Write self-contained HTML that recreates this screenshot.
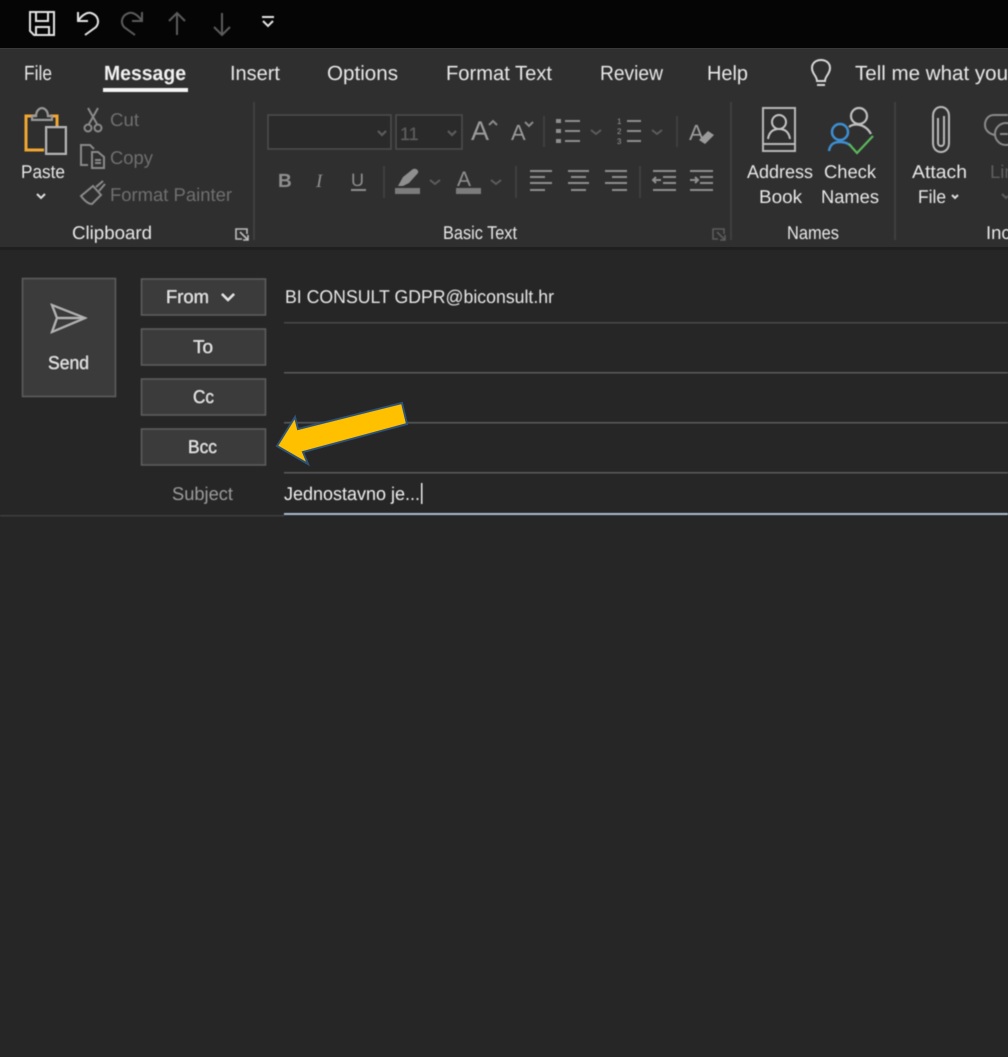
<!DOCTYPE html>
<html><head><meta charset="utf-8"><title>Outlook</title>
<style>
html,body{margin:0;padding:0;background:#262626;width:1008px;height:1057px;overflow:hidden}
svg{display:block}
text{font-family:"Liberation Sans",sans-serif;fill:#e8e8e8;font-size:20.5px}
.d{fill:#6f6f6f}
.s{font-size:18.5px}
.ic{fill:none;stroke:#d8d8d8;stroke-width:2}
.g{fill:none;stroke:#8a8a8a;stroke-width:2}
.m{fill:none;stroke:#5c5c5c;stroke-width:2}
</style></head><body>
<svg width="1008" height="1057" viewBox="0 0 1008 1057" xmlns="http://www.w3.org/2000/svg" text-rendering="geometricPrecision">
<filter id="b" x="-5%" y="-5%" width="110%" height="110%"><feGaussianBlur stdDeviation="0.45"/></filter>
<rect width="1008" height="1057" fill="#262626"/>
<rect width="1008" height="48" fill="#050505"/>
<rect y="48" width="1008" height="199" fill="#2f2f2f"/>
<rect y="48" width="1008" height="1" fill="#3a3a3a"/>
<rect y="247" width="1008" height="3" fill="#1f1f1f"/>
<g filter="url(#b)">
<!-- QAT -->
<path class="ic" d="M30 12H54V35H34L30 31Z M36 12V21H48V12 M36 35V27H49V35" style="stroke:#e4e4e4"/>
<path class="ic" d="M78 12V21H88 M78 21C82 15 87 12 91 13C98 15 100 22 96 27L85 35" style="stroke:#e4e4e4"/>
<path class="m" d="M142 12V21H132 M142 21C138 15 133 12 129 13C122 15 120 22 124 27L135 35"/>
<path class="m" d="M177 35V13M169 21L177 13L185 21"/>
<path class="m" d="M222 13V35M214 27L222 35L230 27"/>
<path fill="none" stroke="#e4e4e4" stroke-width="2" d="M262 17H274M263 21L268 26L273 21"/>
<!-- Tabs -->
<text x="24" y="80" textLength="28" lengthAdjust="spacingAndGlyphs">File</text>
<text x="104" y="80" textLength="82" lengthAdjust="spacingAndGlyphs" font-weight="bold" style="fill:#f2f2f2">Message</text>
<rect x="103" y="88" width="85" height="4" fill="#f5f5f5"/>
<text x="230" y="80" textLength="50" lengthAdjust="spacingAndGlyphs">Insert</text>
<text x="327" y="80" textLength="71" lengthAdjust="spacingAndGlyphs">Options</text>
<text x="446" y="80" textLength="106" lengthAdjust="spacingAndGlyphs">Format Text</text>
<text x="600" y="80" textLength="63" lengthAdjust="spacingAndGlyphs">Review</text>
<text x="707" y="80" textLength="41" lengthAdjust="spacingAndGlyphs">Help</text>
<path class="ic" d="M817 81C817 76 812 74 812 68C812 63 816 60 821 60C826 60 830 63 830 68C830 74 825 76 825 81Z M817 85H825"/>
<text x="855" y="80" textLength="153" lengthAdjust="spacingAndGlyphs">Tell me what you</text>
<!-- separators -->
<path stroke="#454545" stroke-width="1.5" d="M254 102V240M544 116V147M384 166V198M516 166V198M640 166V198M677 116V147M731 102V240M895 102V240" fill="none"/>
<!-- Paste -->
<path fill="none" stroke="#f0a732" stroke-width="3" d="M45 116H26V150H44"/>
<path fill="none" stroke="#f0a732" stroke-width="3" d="M50 116H57V126"/>
<path fill="#2f2f2f" stroke="#9a9a9a" stroke-width="2" d="M32 120V116H36C36 110 40 108 42 108C44 108 48 110 48 116H52V120Z"/>
<rect x="46" y="127" width="20" height="27" fill="#2f2f2f" stroke="#b5b5b5" stroke-width="2"/>
<text x="21" y="178" textLength="44" lengthAdjust="spacingAndGlyphs" class="s">Paste</text>
<path fill="none" stroke="#e0e0e0" stroke-width="2" d="M37 194L41 198L45 194"/>
<!-- Cut/Copy/Painter -->
<path class="g" d="M88 108L97 124M98 108L89 124"/><circle class="g" cx="88" cy="128" r="3.5"/><circle class="g" cx="98" cy="128" r="3.5"/>
<path class="g" d="M88 165H81V145H90L94 149 M92 152H98L104 157V168H92Z M95 160H101M95 163H101"/>
<path class="g" d="M81 196L93 186L101 195L92 204C88 204 84 200 81 196Z"/>
<path class="g" d="M96 187L103 181 M99 191L105 184"/>
<text class="d s" x="110" y="126" textLength="29" lengthAdjust="spacingAndGlyphs">Cut</text>
<text class="d s" x="110" y="164" textLength="43" lengthAdjust="spacingAndGlyphs">Copy</text>
<text class="d s" x="110" y="201" textLength="122" lengthAdjust="spacingAndGlyphs">Format Painter</text>
<text class="s" x="72" y="239" textLength="80" lengthAdjust="spacingAndGlyphs">Clipboard</text>
<path fill="none" stroke="#bdbdbd" stroke-width="1.6" d="M242 239H236V229H247V234M240 232L248 240M248 235V240H243"/>
<!-- Font boxes -->
<rect x="268" y="115" width="123" height="34" fill="#2a2a2a" stroke="#4d4d4d" stroke-width="1.5"/>
<rect x="396" y="115" width="66" height="34" fill="#2a2a2a" stroke="#4d4d4d" stroke-width="1.5"/>
<path class="m" d="M378 131L382 135L386 131M448 131L452 135L456 131"/>
<text class="d" x="400" y="140" style="font-size:18px;fill:#5e5e5e">11</text>
<text x="471" y="140" style="font-size:27px;fill:#9b9b9b">A</text>
<path class="g" d="M489 125L493 121L497 125"/>
<text x="511" y="140" style="font-size:22px;fill:#9b9b9b">A</text>
<path class="g" d="M525 122L529 126L533 122"/>
<!-- list icons -->
<path stroke="#8f8f8f" stroke-width="2" fill="none" d="M565 121H580M565 131H580M565 141H580M627 121H641M627 131H641M627 141H641"/>
<rect x="556" y="119" width="5" height="4" fill="#8f8f8f"/><rect x="556" y="129" width="5" height="4" fill="#8f8f8f"/><rect x="556" y="139" width="5" height="4" fill="#8f8f8f"/>
<path class="m" d="M591 130L596 134L601 130M652 130L657 134L662 130"/>
<text x="617" y="124" style="font-size:8px;fill:#9b9b9b">1</text><text x="617" y="134" style="font-size:8px;fill:#9b9b9b">2</text><text x="617" y="144" style="font-size:8px;fill:#9b9b9b">3</text>
<!-- Clear -->
<text x="689" y="140" style="font-size:22px;fill:#9b9b9b">A</text>
<path fill="#9b9b9b" d="M699 140L708 131L714 135L705 144Z"/>
<!-- Row 2 -->
<text x="278" y="187" font-weight="bold" style="font-size:19px;fill:#8f8f8f">B</text>
<text x="316" y="187" font-style="italic" style="font-size:19px;fill:#8f8f8f;font-family:'Liberation Serif',serif">I</text>
<text x="351" y="186" style="font-size:18px;fill:#8f8f8f">U</text>
<rect x="351" y="189" width="15" height="2" fill="#8f8f8f"/>
<path fill="#8f8f8f" d="M398 186L403 177L413 169C416 168 419 170 418 173L409 183L403 186Z"/>
<rect x="395" y="188" width="25" height="6" fill="#7c7c7c"/>
<path class="m" d="M430 180L435 184L440 180M491 180L496 184L501 180"/>
<text x="457" y="186" style="font-size:21px;fill:#8f8f8f">A</text>
<rect x="456" y="188" width="25" height="6" fill="#7c7c7c"/>
<path stroke="#8f8f8f" stroke-width="2" fill="none" d="M530 171H552M530 177H545M530 183H552M530 190H545 M568 171H589M571 177H586M568 183H589M571 190H586 M605 171H627M612 177H627M605 183H627M612 190H627 M653 171H676M663 177H676M663 183H676M653 190H676 M690 171H713M690 190H713M700 177H713M700 183H713"/>
<path stroke="#8f8f8f" stroke-width="2" fill="none" d="M661 180H653M656 177L653 180L656 183 M690 180H698M695 177L698 180L695 183"/>
<text class="s" x="443" y="239" textLength="74" lengthAdjust="spacingAndGlyphs">Basic Text</text>
<path fill="none" stroke="#5c5c5c" stroke-width="1.6" d="M718 239H713V229H724V234M717 232L725 240M725 235V240H720"/>
<!-- Names -->
<path class="ic" style="stroke:#b9b9b9" d="M763 108H795V151H763Z M763 144H795"/>
<circle class="ic" style="stroke:#c5c5c5" cx="779" cy="122" r="7"/>
<path class="ic" style="stroke:#c5c5c5" d="M768 139C769 132 773 129 779 129C785 129 789 132 790 139"/>
<circle class="ic" style="stroke:#c0c0c0;stroke-width:2.2" cx="859" cy="116" r="8"/>
<path class="ic" style="stroke:#c0c0c0;stroke-width:2.2" d="M849 127C853 123 865 123 871 134"/>
<circle fill="none" stroke="#3d8fd1" stroke-width="2.5" cx="840" cy="132" r="8"/>
<path fill="none" stroke="#3d8fd1" stroke-width="2.5" d="M829 151C830 144 834 142 840 142C845 142 848 143 851 146"/>
<path fill="none" stroke="#5cb85c" stroke-width="2.2" d="M849 144L857 153L873 136"/>
<text x="747" y="178" textLength="66" lengthAdjust="spacingAndGlyphs" class="s">Address</text>
<text x="759" y="203" textLength="43" lengthAdjust="spacingAndGlyphs" class="s">Book</text>
<text x="824" y="178" textLength="52" lengthAdjust="spacingAndGlyphs" class="s">Check</text>
<text x="821" y="203" textLength="58" lengthAdjust="spacingAndGlyphs" class="s">Names</text>
<text class="s" x="787" y="239" textLength="52" lengthAdjust="spacingAndGlyphs">Names</text>
<!-- Attach -->
<path fill="none" stroke="#b9b9b9" stroke-width="2" d="M938 118V143C938 147 944 147 944 143V116 M933 116V143C933 149 937 152 941 152C945 152 949 149 949 143V116C949 110 945 107 941 107C937 107 933 110 933 116"/>
<text x="912" y="178" textLength="55" lengthAdjust="spacingAndGlyphs" class="s">Attach</text>
<text x="918" y="203" textLength="28" lengthAdjust="spacingAndGlyphs" class="s">File</text>
<path fill="none" stroke="#e0e0e0" stroke-width="2" d="M952 195L955 198L958 195"/>
<path class="g" d="M1008 115H994C988 115 985 120 985 125C985 130 989 134 995 135"/>
<circle class="g" cx="1006" cy="134" r="11"/><path class="g" d="M1000 134H1008"/>
<text class="d" x="990" y="178" style="font-size:18.5px;fill:#5e5e5e">Lin</text>
<path class="m" d="M1002 194L1006 198L1008 196"/>
<text class="s" x="986" y="239">Inc</text>
<!-- Send -->
<rect x="22.5" y="278.5" width="93" height="118" fill="#3a3a3a" stroke="#5f5f5f" stroke-width="1.5"/>
<path fill="none" stroke="#b5b5b5" stroke-width="2" d="M52 305L85 318L52 332L57 318Z M57 318H85"/>
<text x="48" y="369" textLength="41" lengthAdjust="spacingAndGlyphs" class="s">Send</text>
<!-- Buttons -->
<rect x="141.500" y="279" width="124" height="36" fill="#3a3a3a" stroke="#5f5f5f" stroke-width="1.5"/>
<rect x="141.500" y="329" width="124" height="36" fill="#3a3a3a" stroke="#5f5f5f" stroke-width="1.5"/>
<rect x="141.500" y="379" width="124" height="36" fill="#3a3a3a" stroke="#5f5f5f" stroke-width="1.5"/>
<rect x="141.500" y="429" width="124" height="36" fill="#3a3a3a" stroke="#5f5f5f" stroke-width="1.5"/>
<text x="166" y="303" textLength="43" lengthAdjust="spacingAndGlyphs" class="s">From</text>
<path fill="none" stroke="#e8e8e8" stroke-width="2.2" d="M222 294L228 300L234 294"/>
<text x="193" y="353" textLength="20" lengthAdjust="spacingAndGlyphs" class="s">To</text>
<text x="193" y="403" textLength="21" lengthAdjust="spacingAndGlyphs" class="s">Cc</text>
<text x="188" y="453" textLength="29" lengthAdjust="spacingAndGlyphs" class="s">Bcc</text>
<text x="172" y="500" textLength="61" lengthAdjust="spacingAndGlyphs" class="s" style="fill:#9b9b9b">Subject</text>
<!-- Fields -->
<text x="285" y="303" textLength="269" lengthAdjust="spacingAndGlyphs" class="s">BI CONSULT GDPR@biconsult.hr</text>
<rect x="284" y="322" width="724" height="1.500" fill="#4a4a4a"/>
<rect x="284" y="372" width="724" height="1.500" fill="#5c5c5c"/>
<rect x="284" y="422" width="724" height="1.500" fill="#5c5c5c"/>
<rect x="284" y="472" width="724" height="1.500" fill="#5c5c5c"/>
<text x="284" y="500" textLength="136" lengthAdjust="spacingAndGlyphs" class="s" style="fill:#f0f0f0">Jednostavno je...</text>
<rect x="421" y="483" width="1.500" height="21" fill="#e8e8e8"/>
<rect x="284" y="513" width="724" height="2" fill="#a9bdd0"/>
<rect x="0" y="515" width="284" height="1.500" fill="#3c3c3c"/>
</g>
<!-- Arrow -->
<path d="M402 403L407 424L303 452L308 464L277 446L295 417L298 429Z" fill="#ffc000" stroke="#2f5377" stroke-width="2" stroke-linejoin="miter"/>
</svg>
</body></html>
